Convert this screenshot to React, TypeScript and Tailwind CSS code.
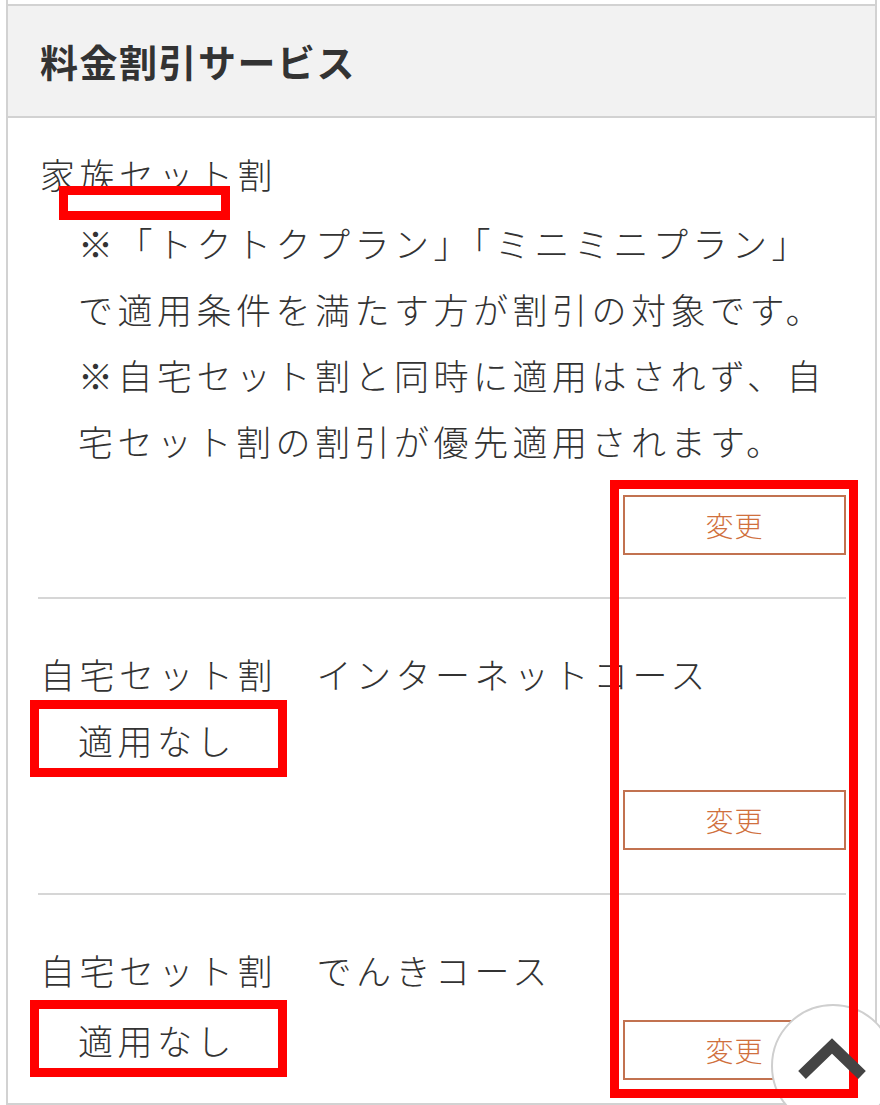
import React from "react";

const FONT = { fontFamily: '"Noto Sans CJK JP", "Noto Sans", sans-serif' };

function ChangeButton() {
  return (
    <div className="flex justify-end">
      <div className="flex h-[60px] w-[223px] items-center justify-center border-2 border-[#c27250] bg-white text-[28px] font-light leading-none tracking-[1px] text-[#d0703d]">
        変更
      </div>
    </div>
  );
}

export default function App() {
  const line = "pl-[2px] text-[35px] font-light leading-[66px] tracking-[4.5px] whitespace-nowrap text-[#333]";
  const note = "pl-[40px] text-[35px] font-light leading-[66px] tracking-[4.5px] whitespace-nowrap text-[#333]";
  return (
    <div className="relative h-[1105px] w-[880px] overflow-hidden bg-white" style={FONT}>
      <div className="ml-[6px] w-[871px] border-x-2 border-[#d2d2d2]">
        <div className="h-[4px]" />
        <div className="flex h-[114px] items-center border-y-2 border-[#d2d2d2] bg-[#f2f2f2] pl-[32px]">
          <span className="text-[38px] font-bold leading-none tracking-[1.5px] text-[#333]">料金割引サービス</span>
        </div>
        <div className="border-b-2 border-[#d2d2d2] pb-[23px] pl-[30px] pr-[29px] pt-[23px]">
          {/* item 1 */}
          <div className={line}>家族セット割</div>
          <div className="h-[3px]" />
          <div className={note}>※「トクトクプラン」「ミニミニプラン」</div>
          <div className={note}>で適用条件を満たす方が割引の対象です。</div>
          <div className={note}>※自宅セット割と同時に適用はされず、自</div>
          <div className={note}>宅セット割の割引が優先適用されます。</div>
          <div className="mt-[21px]">
            <ChangeButton />
          </div>
          <div className="mb-[42px] mt-[42px] h-[2px] bg-[#d6d6d6]" />
          {/* item 2 */}
          <div className={line}>自宅セット割　インターネットコース</div>
          <div className={note}>適用なし</div>
          <div className="mt-[17px]">
            <ChangeButton />
          </div>
          <div className="mb-[42px] mt-[43px] h-[2px] bg-[#d6d6d6]" />
          {/* item 3 */}
          <div className={line}>自宅セット割　でんきコース</div>
          <div className={`${note} mt-[4px]`}>適用なし</div>
          <div className="-mt-[53px]">
            <ChangeButton />
          </div>
        </div>
      </div>

      {/* scroll-to-top circle */}
      <div className="absolute left-[771px] top-[1004px] h-[124px] w-[124px] rounded-full border-2 border-[#cfcfcf] bg-white" />

      {/* annotation boxes */}
      <div className="absolute left-[59px] top-[186px] h-[34px] w-[171px] border-[9px] border-[#ff0000] bg-white" />
      <div className="absolute left-[30px] top-[700px] h-[77px] w-[257px] border-[9px] border-[#ff0000]" />
      <div className="absolute left-[30px] top-[1000px] h-[77px] w-[257px] border-[9px] border-[#ff0000]" />
      <div className="absolute left-[610px] top-[480px] h-[618px] w-[248px] border-[9px] border-[#ff0000]" />

      {/* chevron */}
      <svg className="absolute left-[795px] top-[1036px]" width="76" height="48" viewBox="0 0 76 48">
        <polyline points="7,39 37,10 67,39" fill="none" stroke="#444" strokeWidth="11" strokeLinejoin="miter" />
      </svg>
    </div>
  );
}
